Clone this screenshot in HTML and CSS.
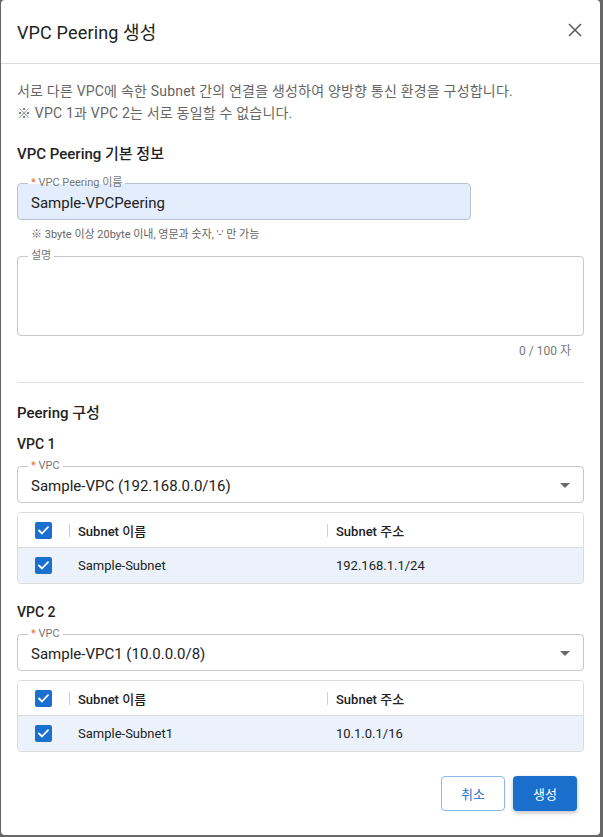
FILE: index.html
```html
<!DOCTYPE html>
<html lang="ko">
<head>
<meta charset="utf-8">
<title>VPC Peering 생성</title>
<link rel="stylesheet" href="styles.css">
</head>
<body>
<div class="modal">
  <div class="modal-header">
    <h1 class="title">VPC Peering 생성</h1>
    <button class="close" aria-label="닫기">
      <svg width="14" height="14" viewBox="0 0 14 14"><path d="M1 1 L13 13 M13 1 L1 13" stroke="#5a5a5a" stroke-width="1.5" fill="none"/></svg>
    </button>
  </div>
  <div class="modal-body">
    <p class="desc">서로 다른 VPC에 속한 Subnet 간의 연결을 생성하여 양방향 통신 환경을 구성합니다.<br>※ VPC 1과 VPC 2는 서로 동일할 수 없습니다.</p>

    <h2 class="section-title first">VPC Peering 기본 정보</h2>
    <div class="field field-name filled">
      <span class="field-label"><span class="req">*</span> VPC Peering 이름</span>
      <span class="field-value">Sample-VPCPeering</span>
    </div>
    <p class="helper">※ 3byte 이상 20byte 이내, 영문과 숫자, '-' 만 가능</p>
    <div class="field field-area">
      <span class="field-label">설명</span>
    </div>
    <p class="counter">0 / 100 자</p>

    <hr class="divider">

    <h2 class="section-title">Peering 구성</h2>

    <h3 class="sub-title">VPC 1</h3>
    <div class="field field-select">
      <span class="field-label"><span class="req">*</span> VPC</span>
      <span class="field-value">Sample-VPC (192.168.0.0/16)</span>
      <span class="arrow"></span>
    </div>
    <div class="table">
      <div class="row head">
        <div class="cell chk"><span class="checkbox"><svg width="11" height="9" viewBox="0 0 11 9"><path d="M1 4.5 L4 7.5 L10 1.2" stroke="#fff" stroke-width="1.8" fill="none" stroke-linecap="round" stroke-linejoin="round"/></svg></span></div>
        <div class="cell name"><span class="sep"></span>Subnet 이름</div>
        <div class="cell addr"><span class="sep"></span>Subnet 주소</div>
      </div>
      <div class="row body">
        <div class="cell chk"><span class="checkbox"><svg width="11" height="9" viewBox="0 0 11 9"><path d="M1 4.5 L4 7.5 L10 1.2" stroke="#fff" stroke-width="1.8" fill="none" stroke-linecap="round" stroke-linejoin="round"/></svg></span></div>
        <div class="cell name">Sample-Subnet</div>
        <div class="cell addr">192.168.1.1/24</div>
      </div>
    </div>

    <h3 class="sub-title vpc2">VPC 2</h3>
    <div class="field field-select">
      <span class="field-label"><span class="req">*</span> VPC</span>
      <span class="field-value">Sample-VPC1 (10.0.0.0/8)</span>
      <span class="arrow"></span>
    </div>
    <div class="table">
      <div class="row head">
        <div class="cell chk"><span class="checkbox"><svg width="11" height="9" viewBox="0 0 11 9"><path d="M1 4.5 L4 7.5 L10 1.2" stroke="#fff" stroke-width="1.8" fill="none" stroke-linecap="round" stroke-linejoin="round"/></svg></span></div>
        <div class="cell name"><span class="sep"></span>Subnet 이름</div>
        <div class="cell addr"><span class="sep"></span>Subnet 주소</div>
      </div>
      <div class="row body">
        <div class="cell chk"><span class="checkbox"><svg width="11" height="9" viewBox="0 0 11 9"><path d="M1 4.5 L4 7.5 L10 1.2" stroke="#fff" stroke-width="1.8" fill="none" stroke-linecap="round" stroke-linejoin="round"/></svg></span></div>
        <div class="cell name">Sample-Subnet1</div>
        <div class="cell addr">10.1.0.1/16</div>
      </div>
    </div>

    <div class="footer">
      <button class="btn btn-cancel">취소</button>
      <button class="btn btn-primary">생성</button>
    </div>
  </div>
</div>
</body>
</html>
```

FILE: styles.css
```css
* { box-sizing: border-box; }
html, body { margin: 0; padding: 0; }
body {
  background: #676767;
  font-family: Roboto, "Noto Sans CJK KR", sans-serif;
  color: #222;
  height: 837px;
  overflow: hidden;
}
.modal {
  margin: 0 3px 0 1px;
  height: 835px;
  background: #fff;
  border-radius: 4px;
}
.modal-header {
  height: 64px;
  border-bottom: 1px solid #dcdcdc;
  display: flex;
  align-items: center;
  justify-content: space-between;
  padding: 0 18px 0 16px;
}
.title {
  margin: 0;
  font-size: 18px;
  font-weight: 400;
  color: #222;
  line-height: 24px;
  padding-top: 2px;
  letter-spacing: 0.15px;
}
.close {
  border: 0;
  background: none;
  padding: 0;
  width: 14px;
  height: 14px;
  display: block;
  margin-top: -4px;
}
.close svg { display: block; }
.modal-body {
  padding: 16px 16px 0 16px;
}
.desc {
  margin: 0;
  font-size: 14px;
  line-height: 22px;
  color: #666;
  letter-spacing: 0.2px;
}
.section-title {
  margin: 20px 0 0;
  font-size: 15px;
  font-weight: 500;
  line-height: 20px;
  color: #222;
}
.field {
  position: relative;
  border: 1px solid #c8c8c8;
  border-radius: 4px;
  background: #fff;
  display: flex;
  align-items: center;
  padding: 0 13px;
}
.field-label {
  position: absolute;
  top: -7px;
  left: 10px;
  padding: 0 3px;
  font-size: 11px;
  line-height: 12px;
  color: #777;
  background: #fff;
}
.req { color: #f26b1d; }
.field-value {
  font-size: 15px;
  color: #222;
  padding-top: 2px;
}
.field-name {
  margin-top: 19px;
  width: 454px;
  height: 37px;
  background: #e3edfb;
  border-color: #b9c3d0;
}
.field-name .field-label {
  background: linear-gradient(to bottom, #fff 0, #fff 7px, #e3edfb 7px);
}
.helper {
  margin: 7px 0 0 14px;
  font-size: 11px;
  line-height: 16px;
  color: #666;
}
.field-area {
  margin-top: 13px;
  height: 80px;
}
.counter {
  margin: 7px 13px 0 0;
  text-align: right;
  font-size: 12px;
  line-height: 16px;
  color: #777;
}
.divider {
  margin: 23px 0 0;
  border: 0;
  border-top: 1px solid #e0e0e0;
}
.sub-title {
  margin: 11px 0 0;
  font-size: 14px;
  font-weight: 500;
  line-height: 20px;
  color: #222;
}
.sub-title.vpc2 { margin-top: 18px; }
.field-select {
  margin-top: 12px;
  height: 37px;
}
.arrow {
  position: absolute;
  right: 13px;
  top: 16px;
  width: 0;
  height: 0;
  border-left: 5px solid transparent;
  border-right: 5px solid transparent;
  border-top: 5px solid #6a6a6a;
}
.table {
  margin-top: 9px;
  border: 1px solid #dcdcdc;
  border-radius: 4px;
  overflow: hidden;
}
.row {
  display: grid;
  grid-template-columns: 51px 258px 1fr;
  align-items: center;
  font-size: 13px;
  color: #222;
}
.row.head {
  height: 35px;
  background: #fff;
  border-bottom: 1px solid #dcdcdc;
  font-weight: 500;
}
.row.body {
  height: 35px;
  background: #ebf2fb;
}
.cell {
  display: flex;
  align-items: center;
  height: 100%;
}
.cell.chk { padding-left: 17px; }
.cell.name, .cell.addr { padding-left: 9px; }
.row.head .cell.name, .row.head .cell.addr { padding-left: 0; }
.sep {
  width: 1px;
  height: 13px;
  background: #cfcfcf;
  margin-right: 8px;
}
.checkbox {
  width: 17px;
  height: 17px;
  background: #1a6fcf;
  border-radius: 2px;
  display: flex;
  align-items: center;
  justify-content: center;
}
.checkbox svg { display: block; }
.footer {
  display: flex;
  justify-content: flex-end;
  gap: 8px;
  margin-top: 24px;
  padding-right: 7px;
}
.btn {
  height: 35px;
  border-radius: 4px;
  font-family: Roboto, "Noto Sans CJK KR", sans-serif;
  font-size: 13px;
  padding: 0;
  cursor: pointer;
}
.btn-cancel {
  width: 64px;
  background: #fff;
  border: 1px solid #8ab7ec;
  color: #1a6fcf;
}
.btn-primary {
  width: 64px;
  background: #1a6fcc;
  border: 0;
  color: #fff;
  box-shadow: 0 2px 4px rgba(0,0,0,0.25);
}
```
